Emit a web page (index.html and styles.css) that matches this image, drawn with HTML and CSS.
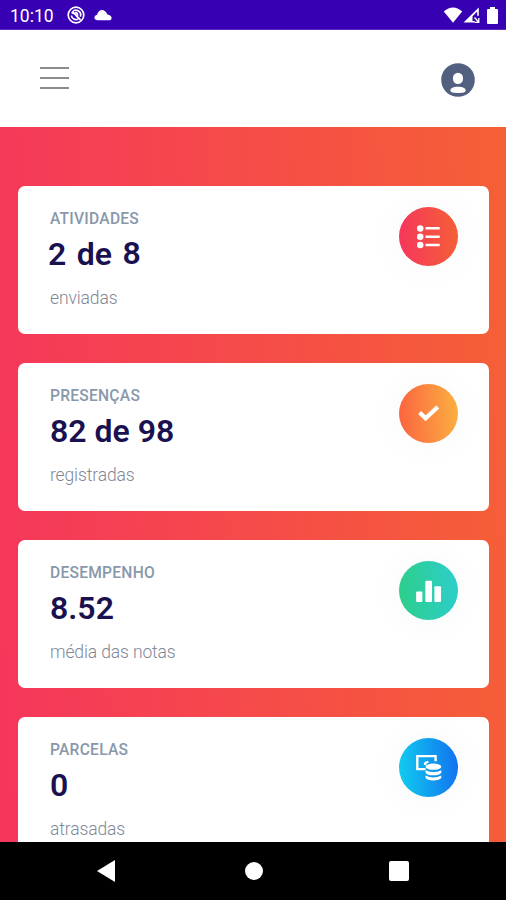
FILE: index.html
```html
<!DOCTYPE html>
<html lang="pt-BR">
<head>
    <meta charset="UTF-8">
    <meta name="viewport" content="width=device-width, initial-scale=1.0">
    <title>Painel do aluno</title>
    <link rel="stylesheet" href="styles.css">
</head>
<body>
    <div class="statusbar">
        <span class="clock">10:10</span>
        <svg class="icon-sync" width="18" height="18" viewBox="0 0 18 18" fill="none" stroke="#fff">
            <circle cx="9" cy="9" r="7.8" stroke-width="1.7"/>
            <path d="M4.4 9.5A4.6 4.6 0 0 0 11.2 13M5.6 5.8A4.6 4.6 0 0 1 13.3 10.6" stroke-width="1.7"/>
            <path d="M4.5 6.5q4 .5 5 3.4l4 4" stroke-width="1.8"/>
            <path d="M8.2 6.2q3 .6 2.4 3.6" stroke-width="1.4"/>
        </svg>
        <svg class="icon-cloud" width="18" height="12" viewBox="0 0 18 12">
            <path d="M3.2 11.2Q.4 11 .4 8.6q.1-2 2.6-2.8Q4.6.9 8 .9q3.4 0 5.4 4.6 4 .6 4.2 3.4 0 2.3-2.8 2.3z" fill="#fff"/>
        </svg>
        <div class="signals">
            <svg width="20" height="16" viewBox="0 0 20 16"><path d="M.8 4.4Q10-3.4 19.2 4.4L10 15.7z" fill="#fff"/></svg>
            <svg width="17" height="16" viewBox="0 0 17 16">
                <path d="M.5 15.5L15.8.5v8.3h-1.6V4.6L9.5 9.2v4.7h1.8l1.2 1.6z" fill="#fff"/>
                <path d="M11.5 10.5l4.3 4.8M15.8 11v4.5h-4" stroke="#fff" stroke-width="1.3" fill="none"/>
            </svg>
            <svg class="icon-battery" width="11" height="17" viewBox="0 0 11 17"><path d="M3 0h5v2h2q1 0 1 1v13q0 1-1 1H1q-1 0-1-1V3q0-1 1-1h2z" fill="#fff"/></svg>
        </div>
    </div>

    <header class="navbar">
        <div class="toggler">
            <span></span>
            <span></span>
            <span></span>
        </div>
        <svg class="user" width="34" height="34" viewBox="0 0 34 34">
            <circle cx="17" cy="17" r="16.8" fill="#525f7f"/>
            <ellipse cx="17" cy="15.4" rx="5.1" ry="5.7" fill="#fff"/>
            <path d="M9.4 27.4c0-2.3 3-3.6 7.6-3.6s7.6 1.3 7.6 3.6c0 1.8-2.5 2.5-7.6 2.5s-7.6-.7-7.6-2.5z" fill="#fff"/>
        </svg>
    </header>

    <main class="content">
        <div class="card">
            <div>
                <h5>ATIVIDADES</h5>
                <p class="value sent"><span>2</span><span>de</span><span class="total">8</span></p>
                <p class="note">enviadas</p>
            </div>
            <div class="badge red">
                <svg width="59" height="59" viewBox="0 0 60 60" fill="#fff">
                    <circle cx="21.6" cy="21.8" r="3.3"/>
                    <circle cx="21.6" cy="30.2" r="3.3"/>
                    <circle cx="21.6" cy="38.6" r="3.3"/>
                    <path d="M27 20.4h14.4v2.6h-14.4zM27 28.9h14.4v2.6h-14.4zM27 37.3h14.4v2.6h-14.4z"/>
                </svg>
            </div>
        </div>
        <div class="card">
            <div>
                <h5>PRESENÇAS</h5>
                <p class="value">82 de 98</p>
                <p class="note">registradas</p>
            </div>
            <div class="badge orange">
                <svg width="59" height="59" viewBox="0 0 60 60">
                    <path d="M21 29l6 5.8L39.4 23.4" fill="none" stroke="#fff" stroke-width="4.4"/>
                </svg>
            </div>
        </div>
        <div class="card">
            <div>
                <h5>DESEMPENHO</h5>
                <p class="value">8.52</p>
                <p class="note">média das notas</p>
            </div>
            <div class="badge green">
                <svg width="59" height="59" viewBox="0 0 60 60" fill="#fff">
                    <rect x="17.4" y="31" width="6.4" height="10.6" rx="1"/>
                    <rect x="26.8" y="20" width="6.8" height="21.6" rx="1"/>
                    <rect x="36" y="25.6" width="6.8" height="16" rx="1"/>
                </svg>
            </div>
        </div>
        <div class="card">
            <div>
                <h5>PARCELAS</h5>
                <p class="value">0</p>
                <p class="note">atrasadas</p>
            </div>
            <div class="badge blue">
                <svg width="59" height="59" viewBox="0 0 60 60">
                    <path d="M27 31.6h-8.4V18.4h18.6v5.2" fill="none" stroke="#fff" stroke-width="2.4"/>
                    <path d="M25.2 27.4q-.4-3.8 4.8-4v1.8q-2.4.6-2.4 2.2z" fill="#fff"/>
                    <ellipse cx="35" cy="29.2" rx="8" ry="3.2" fill="#fff"/>
                    <path d="M27 32.7q8 4 16 0v2.6q-1.6 2.6-8 2.6t-8-2.6zM27 38.2q8 4 16 0v2.2q-1.6 2.8-8 2.8t-8-2.8z" fill="#fff"/>
                </svg>
            </div>
        </div>
    </main>

    <nav class="android-nav">
        <svg width="18" height="22" viewBox="0 0 18 22"><path d="M0 11L18 0v22z" fill="#fff"/></svg>
        <span class="home"></span>
        <span class="recent"></span>
    </nav>
</body>
</html>
```
FILE: styles.css
```css
* {
    box-sizing: border-box;
}
body {
    margin: 0;
    height: 900px;
    display: flex;
    flex-direction: column;
    overflow: hidden;
    background-color: white;
    font-family: Roboto, "Liberation Sans", sans-serif;
}
svg {
    display: block;
}
.statusbar {
    flex: none;
    height: 30px;
    padding: 0 8px 0 10px;
    display: flex;
    align-items: center;
    background-color: #3700b3;
    color: white;
    border-bottom: 1px solid #5a2fc0;
}
.clock {
    width: 44px;
    font-size: 17.5px;
    line-height: 28px;
    padding-top: 3px;
}
.icon-sync {
    margin-left: 13px;
    margin-top: 1px;
}
.icon-cloud {
    margin-left: 9px;
}
.signals {
    margin-left: auto;
    margin-top: 1px;
    display: flex;
    align-items: center;
}
.icon-battery {
    margin-left: 7px;
}
.navbar {
    flex: none;
    height: 97px;
    padding: 3px 31px 0 40px;
    display: flex;
    align-items: center;
    justify-content: space-between;
    background-color: white;
}
.toggler {
    display: flex;
    flex-direction: column;
    gap: 8px;
    margin-top: -4px;
}
.toggler span {
    width: 29px;
    height: 2px;
    background-color: #8c8c8c;
}
.content {
    flex: 1;
    min-height: 0;
    overflow: hidden;
    padding: 59px 16.7px 0 18.3px;
    display: flex;
    flex-direction: column;
    gap: 29.5px;
    background: linear-gradient(87deg, #f5365c 0, #f56036 100%);
}
.card {
    flex: none;
    height: 147.5px;
    padding: 21px 31.3px 0 31.7px;
    display: flex;
    justify-content: space-between;
    background-color: white;
    border-radius: 7px;
}
.card h5 {
    margin: 0;
    font-size: 15.6px;
    font-weight: 500;
    letter-spacing: .25px;
    line-height: 24px;
    color: #8898aa;
}
.value {
    margin: 3px 0 0;
    font-size: 32px;
    font-weight: 600;
    line-height: 40px;
    color: #1a1150;
}
.sent {
    display: flex;
    gap: 10.5px;
    margin-left: -2px;
}
.total {
    margin-top: -1px;
}
.note {
    margin: 11px 0 0;
    font-size: 17.5px;
    font-weight: 300;
    letter-spacing: -.12px;
    line-height: 26px;
    color: #7f8797;
}
.badge {
    width: 59px;
    height: 59px;
    border-radius: 50%;
    box-shadow: 0 0 28px rgba(136, 152, 170, .08);
}
.red {
    background: linear-gradient(87deg, #f5365c 0, #f56036 100%);
}
.orange {
    background: linear-gradient(87deg, #fb6340 0, #fbb140 100%);
}
.green {
    background: linear-gradient(87deg, #2dce89 0, #2dcecc 100%);
}
.blue {
    background: linear-gradient(87deg, #11cdef 0, #1171ef 100%);
}
.android-nav {
    flex: none;
    height: 58px;
    padding: 0 97px;
    display: flex;
    align-items: center;
    justify-content: space-between;
    background-color: black;
}
.home {
    width: 18px;
    height: 18px;
    margin-left: 3px;
    border-radius: 50%;
    background-color: white;
}
.recent {
    width: 20px;
    height: 20px;
    border-radius: 2px;
    background-color: white;
}
```
